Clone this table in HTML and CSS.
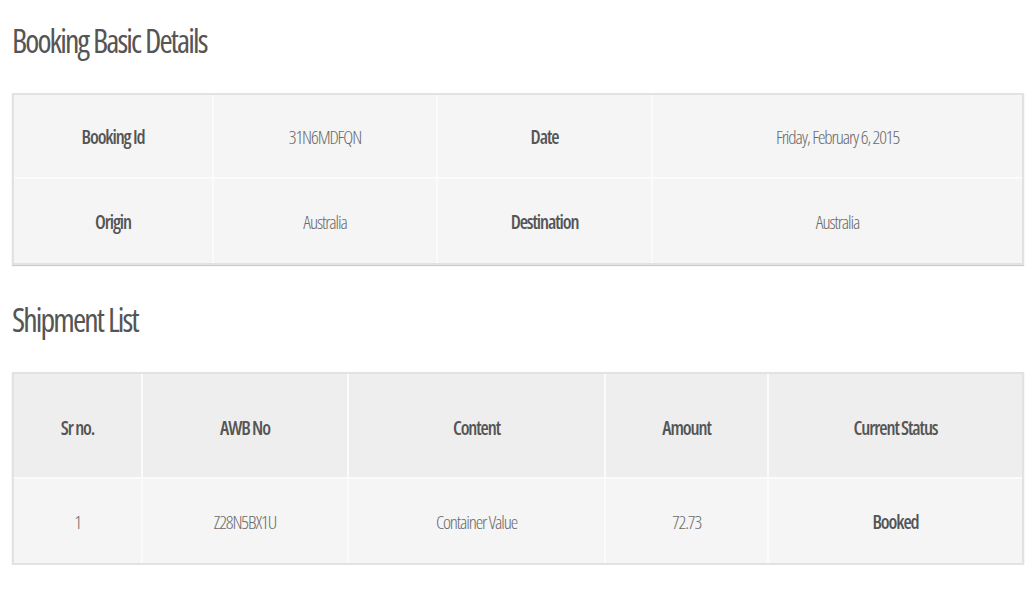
FILE: index.html
```html
<!DOCTYPE html>
<html>
<head>
<meta charset="utf-8">
<link rel="stylesheet" href="styles.css">
</head>
<body>
<div class="page">
  <h2 class="title first">Booking Basic Details</h2>
  <table class="grid details">
    <colgroup><col style="width:200px"><col style="width:224px"><col style="width:215px"><col></colgroup>
    <tr><th>Booking Id</th><td>31N6MDFQN</td><th>Date</th><td>Friday, February 6, 2015</td></tr>
    <tr><th>Origin</th><td>Australia</td><th>Destination</th><td>Australia</td></tr>
  </table>
  <h2 class="title second">Shipment List</h2>
  <table class="grid shipments">
    <colgroup><col style="width:129px"><col style="width:206px"><col style="width:257px"><col style="width:163px"><col></colgroup>
    <tr class="head"><th>Sr no.</th><th>AWB No</th><th>Content</th><th>Amount</th><th>Current Status</th></tr>
    <tr><td>1</td><td>Z28N5BX1U</td><td>Container Value</td><td>72.73</td><th>Booked</th></tr>
  </table>
</div>
</body>
</html>
```
FILE: styles.css
```css
html, body {
  margin: 0;
  padding: 0;
  background: #fff;
}
.page {
  padding: 0 12px;
  font-family: "Open Sans", "Liberation Sans", sans-serif;
  font-stretch: 75%;
  color: #777;
}
.title {
  margin: 0;
  box-sizing: border-box;
  font-size: 32px;
  font-weight: 400;
  color: #555;
  line-height: 40px;
  letter-spacing: -1.9px;
  word-spacing: 1px;
}
.title.first {
  padding-top: 21px;
  height: 93px;
}
.title.second {
  padding-top: 35px;
  height: 107px;
}
.grid {
  width: 100%;
  border-collapse: separate;
  border-spacing: 0;
  table-layout: fixed;
  border: 2px solid #e2e2e2;
  box-shadow: 0 1px 1px #ccc;
  background: #f5f5f5;
  font-size: 19px;
  letter-spacing: -1.1px;
}
.grid th, .grid td {
  text-align: center;
  border-right: 2px solid #fbfbfb;
  border-bottom: 2px solid #fbfbfb;
  padding: 2px 0 0;
}
.grid tr > :last-child { border-right: 0; }
.grid tr:last-child > * { border-bottom: 0; }
.grid th {
  font-weight: 600;
  color: #555;
}
.grid td {
  font-weight: 300;
  color: #6a6a6a;
}
.details tr { height: 84px; }
.shipments tr.head { height: 105px; }
.shipments tr.head th { background: #eee; padding-top: 4px; }
.shipments tr { height: 84px; }
```
